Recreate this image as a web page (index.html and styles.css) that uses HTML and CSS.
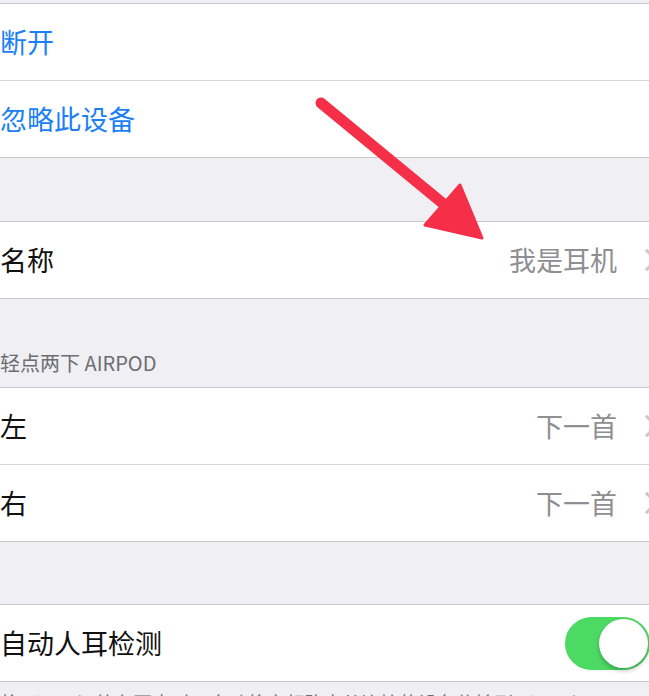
FILE: index.html
```html
<!DOCTYPE html>
<html lang="zh-CN">
<head>
<meta charset="utf-8">
<link rel="stylesheet" href="styles.css">
</head>
<body>
<div class="page">
  <div class="gap gap-top"></div>
  <div class="group">
    <div class="row"><span class="label link">断开</span></div>
    <div class="sep"></div>
    <div class="row"><span class="label link">忽略此设备</span></div>
  </div>
  <div class="gap gap-a"></div>
  <div class="group">
    <div class="row">
      <span class="label">名称</span>
      <span class="value">我是耳机<span class="chev"></span></span>
    </div>
  </div>
  <div class="gap header"><span class="header-text">轻点两下 AIRPOD</span></div>
  <div class="group">
    <div class="row">
      <span class="label">左</span>
      <span class="value">下一首<span class="chev"></span></span>
    </div>
    <div class="sep"></div>
    <div class="row">
      <span class="label">右</span>
      <span class="value">下一首<span class="chev"></span></span>
    </div>
  </div>
  <div class="gap gap-b"></div>
  <div class="group">
    <div class="row">
      <span class="label">自动人耳检测</span>
      <span class="toggle"><span class="knob"></span></span>
    </div>
  </div>
  <div class="footer">将 AirPods 放在耳中时，自动将音频路由从连接的设备传输到 AirPods。</div>

  <svg class="arrow" width="649" height="696" viewBox="0 0 649 696">
    <line x1="321" y1="103" x2="446" y2="206" stroke="#f42f47" stroke-width="11" stroke-linecap="round"/>
    <polygon points="425,225 460,185 482,238" fill="#f42f47" stroke="#f42f47" stroke-width="3" stroke-linejoin="round"/>
  </svg>
</div>
</body>
</html>
```

FILE: styles.css
```css
html, body {
  margin: 0;
  padding: 0;
  background: #efeff4;
}
.page {
  position: relative;
  width: 649px;
  height: 696px;
  overflow: hidden;
  font-family: "Noto Sans CJK SC", "Noto Sans", sans-serif;
}
.gap { background: #efeff4; }
.gap-top { height: 3px; }
.gap-a { height: 63px; }
.gap-b { height: 62px; }
.header {
  height: 88px;
  display: flex;
  align-items: flex-end;
  box-sizing: border-box;
  padding-bottom: 11px;
}
.header-text {
  font-size: 20px;
  line-height: 26px;
  color: #6d6d72;
}
.group {
  background: #fff;
  border-top: 1px solid #c8c7cc;
  border-bottom: 1px solid #c8c7cc;
}
.sep {
  height: 1px;
  background: #d4d4d8;
}
.row {
  height: 76px;
  display: flex;
  align-items: center;
  justify-content: space-between;
}
.label {
  font-size: 27px;
  color: #111;
  line-height: 36px;
}
.link { color: #1b7ff5; }
.value {
  display: flex;
  align-items: center;
  font-size: 27px;
  color: #8e8e93;
  line-height: 36px;
  margin-right: -10px;
}
.chev {
  width: 13px;
  height: 13px;
  border-top: 3px solid #c7c7cc;
  border-right: 3px solid #c7c7cc;
  transform: rotate(45deg);
  margin-left: 22px;
  margin-right: 4px;
}
.toggle {
  position: relative;
  width: 85px;
  height: 53px;
  border-radius: 27px;
  background: #4cd964;
  margin-right: -1px;
  flex: none;
}
.knob {
  position: absolute;
  right: 2px;
  top: 2px;
  width: 49px;
  height: 49px;
  border-radius: 50%;
  background: #fff;
  box-shadow: 0 3px 4px rgba(0,0,0,0.22), 0 0 1px rgba(0,0,0,0.15);
}
.footer {
  padding-top: 8px;
  font-size: 19px;
  color: #6d6d72;
  white-space: nowrap;
  line-height: 26px;
}
.arrow {
  position: absolute;
  left: 0;
  top: 0;
  pointer-events: none;
}
```
